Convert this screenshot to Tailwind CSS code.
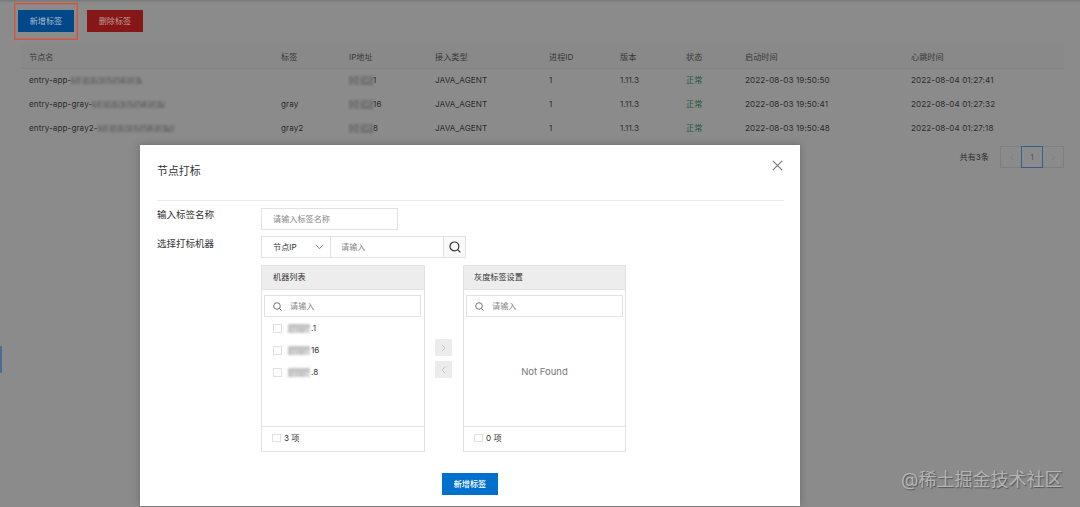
<!DOCTYPE html>
<html lang="zh-CN">

<head>
    <meta charset="UTF-8">
    <title>节点打标</title>
    <script src="https://cdn.jsdelivr.net/npm/@tailwindcss/browser@4"></script>
</head>

<body class="relative w-[1080px] h-[507px] overflow-hidden bg-[#8b8b8b] font-['Inter','Noto_Sans_CJK_SC',sans-serif] text-[8.15px] leading-[12px] text-[#2c2c2c]">
    <!-- Page under the dialog -->
    <div class="h-[3px] bg-linear-to-b from-[#777] to-[#8b8b8b]"></div>
    <main class="pl-[14px] pr-4">
        <div class="flex items-start">
            <div class="w-16 h-[37px] border border-[#d8523d] shadow-[inset_0_0_0_1px_rgba(216,82,61,0.4)] pl-[3px] pt-[6px]">
                <button class="block w-14 h-[22px] bg-[#01488a] text-[#a9bccd]">新增标签</button>
            </div>
            <button class="block w-14 h-[22px] mt-[7px] ml-[9px] bg-[#861717] text-[#c09a9a]">删除标签</button>
        </div>

        <div id="nodeTable" class="mt-[5px] ml-[7px]">
            <div class="grid grid-cols-[252px_68px_86px_114px_71px_66px_59px_166px_1fr] items-center h-6 pl-2 bg-[#898989] border-b border-[#828282] text-[#383838]">
                <span>节点名</span>
                <span>标签</span>
                <span>IP地址</span>
                <span>接入类型</span>
                <span>进程ID</span>
                <span>版本</span>
                <span>状态</span>
                <span>启动时间</span>
                <span>心跳时间</span>
            </div>
        </div>

        <div class="flex justify-end items-center mt-[5px]">
            <span class="mr-[11px]">共有3条</span>
            <div class="flex h-[22px] text-[#355a78]">
                <span class="w-[21px] border border-r-0 border-[#7f7f7f] flex items-center justify-center">
                    <svg class="w-[5px] h-[7px]" viewBox="0 0 5 7" fill="none" stroke="#7b7b7b" stroke-width=".8"><path d="M4 1 1.5 3.5 4 6" /></svg>
                </span>
                <span class="w-[22px] border border-[#2f5f8a] flex items-center justify-center">1</span>
                <span class="w-[21px] border border-l-0 border-[#7f7f7f] flex items-center justify-center">
                    <svg class="w-[5px] h-[7px]" viewBox="0 0 5 7" fill="none" stroke="#7b7b7b" stroke-width=".8"><path d="M1 1 3.5 3.5 1 6" /></svg>
                </span>
            </div>
        </div>
    </main>

    <!-- Collapsed sidebar handle -->
    <div class="absolute left-0 top-[346px] w-[2px] h-[27px] bg-[#4d6a91]"></div>

    <!-- Dialog -->
    <div class="absolute left-[140px] top-[145px] w-[660px] h-[361px] bg-white px-[17px] text-[#333] shadow-[0_0_8px_rgba(0,0,0,0.25)]">
        <div class="flex justify-between h-[56px] border-b border-[#ebebeb] -mr-px">
            <h2 class="text-[10.9px] leading-4 mt-[18px]">节点打标</h2>
            <svg class="w-[11px] h-[11px] mt-[15px] mr-px" viewBox="0 0 11 11" fill="none" stroke="#777" stroke-width="1.1"><path d="M.8.8l9.4 9.4M10.2.8.8 10.2" /></svg>
        </div>

        <div class="flex mt-[7px]">
            <label class="w-[104px] text-[9.5px] leading-[14px]">输入标签名称</label>
            <div class="w-[137px] h-[22px] border border-[#e2e2e2] pl-[11px] flex items-center text-[#888]">请输入标签名称</div>
        </div>

        <div class="flex mt-[6px]">
            <label class="w-[104px] text-[9.5px] leading-[14px] mt-px">选择打标机器</label>
            <div class="flex w-[205px] h-[22px] border border-[#e2e2e2]">
                <div class="flex items-center justify-between w-[69px] border-r border-[#e2e2e2] pl-[11px] pr-[6px]">
                    节点IP
                    <svg class="w-[9px] h-[6px]" viewBox="0 0 9 6" fill="none" stroke="#777" stroke-width=".9"><path d="M.8.8l3.7 3.9L8.2.8" /></svg>
                </div>
                <div class="flex-1 flex items-center pl-[10px] text-[#888]">请输入</div>
                <div class="w-[22px] border-l border-[#e2e2e2] bg-[#fafafa] flex items-center justify-center">
                    <svg class="w-3 h-3" viewBox="0 0 12 12" fill="none" stroke="#333" stroke-width="1.2"><circle cx="5.4" cy="5.4" r="4.4" /><path d="M8.6 8.6l2.8 2.8" /></svg>
                </div>
            </div>
        </div>

        <!-- Transfer -->
        <div class="flex items-start mt-[7px] ml-[104px]">
            <div class="w-[164px] h-[187px] border border-[#e3e3e3] flex flex-col">
                <div class="h-6 bg-[#ededed] border-b border-[#e3e3e3] pl-[11px] pb-px flex items-center">机器列表</div>
                <div class="mt-[5px] ml-[2px] mr-[3px] h-[22px] border border-[#e2e2e2] pl-[8px] flex items-center gap-2 text-[#888]">
                    <svg class="w-[9px] h-[9px]" viewBox="0 0 9 9" fill="none" stroke="#666" stroke-width=".9"><circle cx="4" cy="4" r="3.3" /><path d="M6.4 6.4l2.1 2.1" /></svg>
                    请输入
                </div>
                <div id="machineList" class="flex-1 pl-[11px]"></div>
                <div class="h-[25px] border-t border-[#e3e3e3] pl-[10px] pb-[2px] flex items-center gap-[3px]">
                    <span class="w-[9px] h-2 border border-[#e0e0e0]"></span>3 项
                </div>
            </div>
            <div class="w-[38px] pl-[10px] pt-[74px] flex flex-col gap-[5px]">
                <span class="w-[17px] h-[17px] bg-[#ececec] flex items-center justify-center">
                    <svg class="w-[5px] h-[8px]" viewBox="0 0 5 8" fill="none" stroke="#c4c4c4"><path d="M.8.8 4 4 .8 7.2" /></svg>
                </span>
                <span class="w-[17px] h-[17px] bg-[#ececec] flex items-center justify-center">
                    <svg class="w-[5px] h-[8px]" viewBox="0 0 5 8" fill="none" stroke="#c4c4c4"><path d="M4.2.8 1 4l3.2 3.2" /></svg>
                </span>
            </div>
            <div class="w-[163px] h-[187px] border border-[#e3e3e3] flex flex-col">
                <div class="h-6 bg-[#ededed] border-b border-[#e3e3e3] pl-[10px] pb-px flex items-center">灰度标签设置</div>
                <div class="mt-[5px] mx-[2px] h-[22px] border border-[#e2e2e2] pl-[8px] flex items-center gap-2 text-[#888]">
                    <svg class="w-[9px] h-[9px]" viewBox="0 0 9 9" fill="none" stroke="#666" stroke-width=".9"><circle cx="4" cy="4" r="3.3" /><path d="M6.4 6.4l2.1 2.1" /></svg>
                    请输入
                </div>
                <div class="flex-1 flex items-center justify-center text-[9.5px] text-[#777]">Not Found</div>
                <div class="h-[25px] border-t border-[#e3e3e3] pl-[10px] pb-[2px] flex items-center gap-[3px]">
                    <span class="w-[9px] h-2 border border-[#e0e0e0]"></span>0 项
                </div>
            </div>
        </div>

        <button class="block w-14 h-[22px] mt-[21px] ml-[285px] bg-[#0070cc] text-white font-medium">新增标签</button>
    </div>

    <!-- Watermark -->
    <div class="absolute left-[901px] top-[468px] text-[18px] leading-6 whitespace-nowrap text-[#b4b4b4] [text-shadow:1px_1px_1px_#555]">@稀土掘金技术社区</div>

    <script>
        const nodes = [
            { name: "entry-app-", mask: 71, tag: "", ip: "1", start: "19:50:50", beat: "01:27:41" },
            { name: "entry-app-gray-", mask: 73, tag: "gray", ip: "16", start: "19:50:41", beat: "01:27:32" },
            { name: "entry-app-gray2-", mask: 76, tag: "gray2", ip: "8", start: "19:50:48", beat: "01:27:18" },
        ];

        // Pixelated block that hides part of a value
        function mosaic(width, height, cell, shades) {
            let rects = "";
            for (let y = 0; y < height; y += cell) {
                for (let x = 0; x < width; x += cell) {
                    const shade = shades[(x * 7 + y * 5 + ((x * y) % 11)) % shades.length];
                    rects += `<rect x="${x}" y="${y}" width="${cell}" height="${cell}" fill="${shade}"/>`;
                }
            }
            return `<svg class="shrink-0 blur-[1px]" width="${width}" height="${height}">${rects}</svg>`;
        }

        const dark = ["#747474", "#7e7e7e", "#707070", "#838383", "#797979"];
        const light = ["#c4c4c4", "#d2d2d2", "#cbcbcb", "#dedede"];

        nodes.forEach((node) => {
            document.querySelector("#nodeTable").insertAdjacentHTML("beforeend", `
                <div class="grid grid-cols-[252px_68px_86px_114px_71px_66px_59px_166px_1fr] items-center h-6 pl-2 pb-[2px] tracking-[0.08px]">
                    <span class="flex items-center">${node.name}${mosaic(node.mask, 7, 3, dark)}</span>
                    <span>${node.tag}</span>
                    <span class="flex items-center">${mosaic(24, 9, 3, dark)}${node.ip}</span>
                    <span>JAVA_AGENT</span>
                    <span>1</span>
                    <span>1.11.3</span>
                    <span class="text-[#1d5838]">正常</span>
                    <span>2022-08-03 ${node.start}</span>
                    <span>2022-08-04 ${node.beat}</span>
                </div>`);
        });

        [".1", "16", ".8"].forEach((ip) => {
            document.querySelector("#machineList").insertAdjacentHTML("beforeend", `
                <div class="flex items-center h-[22px]">
                    <span class="w-[9px] h-[9px] border border-[#e0e0e0] mr-[6px]"></span>${mosaic(22, 9, 4, light)}<span class="pl-px">${ip}</span>
                </div>`);
        });
    </script>
</body>

</html>
